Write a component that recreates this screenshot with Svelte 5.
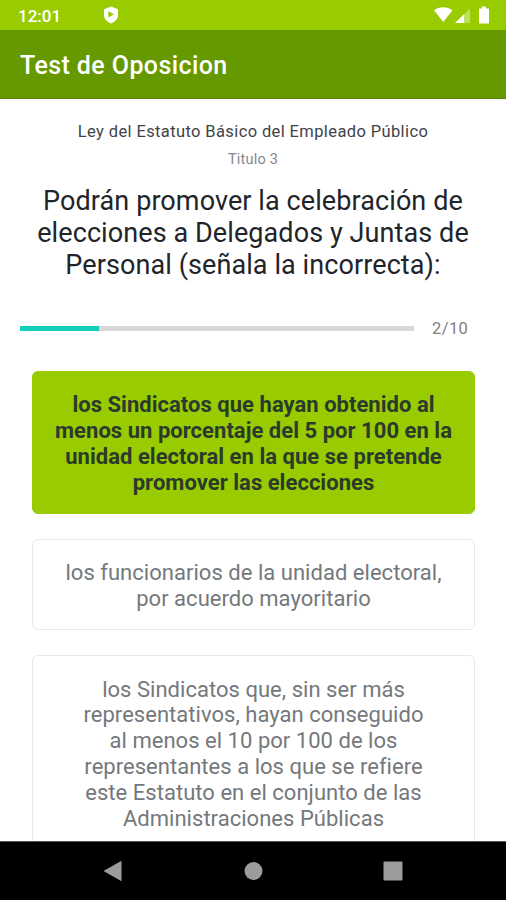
<script>
  const question = {
    law: 'Ley del Estatuto Básico del Empleado Público',
    section: 'Titulo 3',
    lines: [
      'Podrán promover la celebración de',
      'elecciones a Delegados y Juntas de',
      'Personal (señala la incorrecta):',
    ],
  };

  const answers = [
    [
      'los Sindicatos que hayan obtenido al',
      'menos un porcentaje del 5 por 100 en la',
      'unidad electoral en la que se pretende',
      'promover las elecciones',
    ],
    ['los funcionarios de la unidad electoral,', 'por acuerdo mayoritario'],
    [
      'los Sindicatos que, sin ser más',
      'representativos, hayan conseguido',
      'al menos el 10 por 100 de los',
      'representantes a los que se refiere',
      'este Estatuto en el conjunto de las',
      'Administraciones Públicas',
    ],
  ];

  const current = 2;
  const total = 10;

  let selected = $state(0);
</script>

<div class="screen">
  <div class="status">
    <span class="clock">12:01</span>
    <svg class="shield" width="16" height="18" viewBox="0 0 16 18">
      <path d="M8 .5 15 3.2V9c0 3.8-2.8 6.8-7 8.4C3.8 15.8 1 12.8 1 9V3.2z" fill="#fff" />
      <path d="M5.3 5.2v6.2L11 8.3z" fill="#98cc00" />
    </svg>
    <svg class="signals" width="58" height="20" viewBox="0 0 58 20">
      <path d="M0 5.3C5 1.3 13.500 1.3 18.500 5.3L9.3 17z" fill="#fff" />
      <path d="M21 18 36 3.5V18z" fill="#fff" opacity=".38" />
      <path d="M21 18 30 9.3V18z" fill="#fff" />
      <path d="M47.7 1.5H52v2h3v15H45v-15h2.700z" fill="#fff" />
    </svg>
  </div>

  <header class="toolbar">
    <h1>Test de Oposicion</h1>
  </header>

  <main class="content">
    <p class="law">{question.law}</p>
    <p class="section">{question.section}</p>
    <h2 class="question">{question.lines.join('\n')}</h2>

    <div class="progress">
      <div class="track">
        <div class="fill" style="width: {(current / total) * 100}%"></div>
      </div>
      <span class="count">{current}/{total}</span>
    </div>

    <div class="answers">
      {#each answers as lines, i}
        <button class="answer" class:selected={selected === i} onclick={() => (selected = i)}>{lines.join('\n')}</button>
      {/each}
    </div>
  </main>

  <nav class="navbar">
    <svg width="20" height="22" viewBox="0 0 20 22"><path d="M.5 11 18.5.8v20.4z" /></svg>
    <svg width="20" height="22" viewBox="0 0 20 22"><circle cx="10.5" cy="11" r="9" /></svg>
    <svg width="20" height="22" viewBox="0 0 20 22"><rect x="0.5" y="1.5" width="19" height="19" rx="1" /></svg>
  </nav>
</div>

<style>
  :global(body) {
    margin: 0;
    background: #fff;
  }

  .screen {
    display: flex;
    flex-direction: column;
    height: 900px;
    overflow: hidden;
    background: #fff;
    font-family: Roboto, 'Noto Sans', sans-serif;
  }

  .status {
    display: flex;
    align-items: center;
    flex-shrink: 0;
    box-sizing: border-box;
    height: 30px;
    padding: 0 14px 0 18px;
    background: #98cc00;
  }

  .clock {
    width: 85px;
    padding-top: 2px;
    color: #fff;
    font-size: 17px;
    font-weight: 500;
    line-height: 20px;
  }

  .signals {
    margin-left: auto;
  }

  .toolbar {
    display: flex;
    align-items: center;
    flex-shrink: 0;
    box-sizing: border-box;
    height: 69px;
    padding: 4px 20px 0;
    border-bottom: 1px solid #568500;
    background: #669900;
  }

  h1 {
    margin: 0;
    color: #fff;
    font-size: 25px;
    font-weight: 500;
    line-height: 30px;
    letter-spacing: 0.4px;
  }

  .content {
    flex: 1;
    min-height: 0;
    overflow: hidden;
    text-align: center;
  }

  .law {
    margin: 23px 0 0;
    color: #3f4347;
    font-size: 16.5px;
    line-height: 20px;
    letter-spacing: 0.38px;
  }

  .section {
    margin: 9px 0 0;
    color: #85888b;
    font-size: 14.5px;
    line-height: 18px;
    letter-spacing: 0.2px;
  }

  .question {
    margin: 16px 0 0;
    color: #212529;
    font-size: 27px;
    font-weight: 400;
    line-height: 32px;
    letter-spacing: 0.09px;
    white-space: pre;
  }

  .progress {
    display: flex;
    align-items: center;
    height: 20px;
    margin: 37px 36px 0 20px;
  }

  .track {
    width: 394px;
    height: 5px;
    background: #d8d8d8;
  }

  .fill {
    height: 100%;
    background: #14cfb9;
  }

  .count {
    margin-left: 18px;
    padding-top: 2px;
    color: #808080;
    font-size: 16.5px;
    line-height: 20px;
    letter-spacing: 0.4px;
  }

  .answers {
    display: flex;
    flex-direction: column;
    gap: 25px;
    padding: 33px 31px 0 32px;
  }

  .answer {
    display: block;
    padding: 20.3px 10px 17.5px;
    border: 1px solid #e8e8ea;
    border-radius: 6px;
    background: #fff;
    color: #74787c;
    font-family: inherit;
    font-size: 22px;
    line-height: 25.8px;
    letter-spacing: 0.03px;
    text-align: center;
    white-space: pre;
  }

  .answer.selected {
    border-color: #98cc00;
    background: #98cc00;
    color: #2b3a2c;
    font-weight: 700;
  }

  .navbar {
    display: flex;
    justify-content: space-between;
    align-items: center;
    flex-shrink: 0;
    box-sizing: border-box;
    height: 59px;
    padding: 0 103px;
    border-top: 1px solid #555;
    background: #000;
  }

  .navbar svg {
    fill: #9c9c9c;
  }
</style>
